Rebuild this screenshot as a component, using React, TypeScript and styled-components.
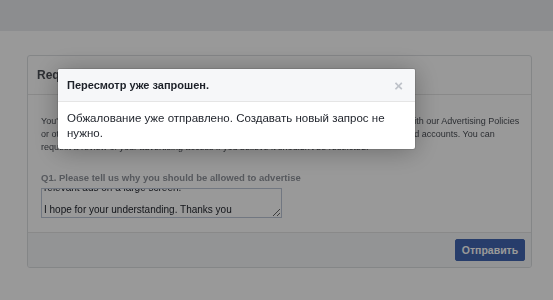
import React, { useEffect, useRef } from 'react';
import styled, { createGlobalStyle } from 'styled-components';

const GlobalStyle = createGlobalStyle`
  html, body {
    margin: 0;
    padding: 0;
    background: #fff;
    font-family: "Liberation Sans", Arial, Helvetica, sans-serif;
  }
`;

const Page = styled.div`
  position: relative;
  width: 553px;
  height: 300px;
  overflow: hidden;
  background: #fff;
`;

const TopBand = styled.div`
  height: 31px;
  background: #e9ebee;
`;

const Content = styled.div`
  padding: 24px 21px 0 27px;
`;

const Card = styled.div`
  background: #fff;
  border: 1px solid #dddfe2;
  border-radius: 3px;
  overflow: hidden;
`;

const CardHeader = styled.div`
  height: 38px;
  display: flex;
  align-items: center;
  padding: 0 9px;
  border-bottom: 1px solid #e5e5e5;
  font-size: 12px;
  font-weight: bold;
  color: #4b4f56;
`;

const CardBody = styled.div`
  padding: 20px 13px 14px;
`;

const Intro = styled.p`
  margin: 0 0 18px;
  font-size: 9px;
  line-height: 13px;
  color: #4b4f56;
  white-space: nowrap;
`;

const Question = styled.div`
  font-size: 9.5px;
  font-weight: bold;
  color: #90949c;
  margin-bottom: 5px;
`;

const Answer = styled.textarea`
  display: block;
  box-sizing: border-box;
  width: 241px;
  height: 30px;
  margin: 0;
  padding: 0 2px 2px;
  border: 1px solid #bdc7d8;
  font-family: "Liberation Sans", Arial, sans-serif;
  font-size: 10px;
  line-height: 11px;
  color: #1d2129;
  resize: both;
  overflow-y: scroll;

  &::-webkit-scrollbar {
    width: 10px;
  }
  &::-webkit-scrollbar-track {
    background: #fff;
    border-left: 1px solid #dddfe2;
  }
  &::-webkit-scrollbar-thumb {
    background: #fff;
    border-left: 1px solid #dddfe2;
    border-top: 1px solid #dddfe2;
  }
`;

const CardFooter = styled.div`
  display: flex;
  justify-content: flex-end;
  padding: 6px 6px 6px;
  background: #f6f7f9;
  border-top: 1px solid #e5e5e5;
`;

const PrimaryButton = styled.button`
  width: 70px;
  height: 22px;
  padding: 0;
  border: 1px solid #4267b2;
  border-radius: 2px;
  background: #4267b2;
  color: #fff;
  font-family: "Liberation Sans", Arial, sans-serif;
  font-size: 10.5px;
  font-weight: bold;
`;

const Overlay = styled.div`
  position: absolute;
  inset: 0;
  background: rgba(0, 0, 0, 0.4);
`;

const Dialog = styled.div`
  position: absolute;
  left: 58px;
  top: 69px;
  width: 357px;
  background: #fff;
  border-radius: 2px;
  box-shadow: 0 2px 26px rgba(0, 0, 0, 0.3), 0 0 0 1px rgba(0, 0, 0, 0.1);
  overflow: hidden;
`;

const DialogHeader = styled.div`
  height: 32px;
  display: flex;
  align-items: center;
  justify-content: space-between;
  padding: 0 12px 0 9px;
  background: #f6f7f9;
  border-bottom: 1px solid #e5e5e5;
`;

const DialogTitle = styled.div`
  font-size: 11px;
  font-weight: bold;
  color: #1d2129;
`;

const CloseButton = styled.span`
  font-size: 15px;
  line-height: 1;
  color: #bec2c9;
  font-weight: bold;
`;

const DialogBody = styled.div`
  padding: 9px 9px 8px;
  font-size: 11.5px;
  line-height: 15px;
  color: #1d2129;
`;

const answerText =
  'I would like to advertise my app because it helps people find events nearby and show\n' +
  'relevant ads on a large screen.\n\nI hope for your understanding. Thanks you';

const App = () => {
  const answerRef = useRef<HTMLTextAreaElement>(null);

  useEffect(() => {
    if (answerRef.current) {
      answerRef.current.scrollTop = answerRef.current.scrollHeight;
    }
  }, []);

  return (
    <Page>
      <GlobalStyle />
      <TopBand />
      <Content>
        <Card>
          <CardHeader>Request Review</CardHeader>
          <CardBody>
            <Intro>
              You're not allowed to advertise on Facebook because your ad account activity didn't comply with our Advertising Policies
              <br />
              or other community standards for ads, or because it was linked to other previously restricted ad accounts. You can
              <br />
              request a review of your advertising access if you believe it shouldn't be restricted.
            </Intro>
            <Question>Q1. Please tell us why you should be allowed to advertise</Question>
            <Answer ref={answerRef} defaultValue={answerText} />
          </CardBody>
          <CardFooter>
            <PrimaryButton>Отправить</PrimaryButton>
          </CardFooter>
        </Card>
      </Content>
      <Overlay />
      <Dialog>
        <DialogHeader>
          <DialogTitle>Пересмотр уже запрошен.</DialogTitle>
          <CloseButton>×</CloseButton>
        </DialogHeader>
        <DialogBody>Обжалование уже отправлено. Создавать новый запрос не нужно.</DialogBody>
      </Dialog>
    </Page>
  );
};

export default App;
